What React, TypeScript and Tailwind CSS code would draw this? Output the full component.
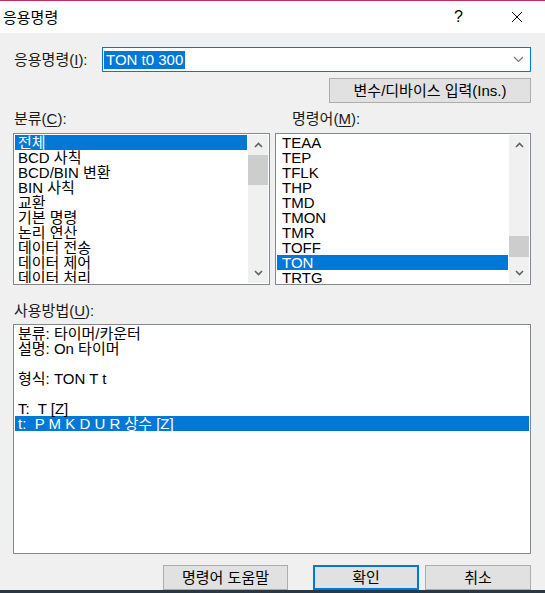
import React from "react";

const categories = [
  "전체",
  "BCD 사칙",
  "BCD/BIN 변환",
  "BIN 사칙",
  "교환",
  "기본 명령",
  "논리 연산",
  "데이터 전송",
  "데이터 제어",
  "데이터 처리",
];

const commands = ["TEAA", "TEP", "TFLK", "THP", "TMD", "TMON", "TMR", "TOFF", "TON", "TRTG"];

const usageLines = [
  "분류: 타이머/카운터",
  "설명: On 타이머",
  "",
  "형식: TON T t",
  "",
  "T:  T [Z]",
  "t:  P M K D U R 상수 [Z]",
];

const Chevron = ({ up }: { up?: boolean }) => (
  <svg width="9" height="6" viewBox="0 0 9 6">
    <polyline
      points={up ? "1,5 4.5,1.5 8,5" : "1,1 4.5,4.5 8,1"}
      fill="none"
      stroke="#606060"
      strokeWidth="1.6"
    />
  </svg>
);

// fake vertical scrollbar, thumb position in px from the top of the track
const ScrollBar = ({ thumbTop, thumbHeight }: { thumbTop: number; thumbHeight: number }) => (
  <div className="relative w-[20px] h-full bg-[#f0f0f0] flex flex-col justify-between">
    <div className="h-[20px] flex items-center justify-center">
      <Chevron up />
    </div>
    <div
      className="absolute left-0 w-[20px] bg-[#cdcdcd]"
      style={{ top: thumbTop, height: thumbHeight }}
    />
    <div className="h-[20px] flex items-center justify-center">
      <Chevron />
    </div>
  </div>
);

const Label = ({ text, hot, className = "" }: { text: string; hot: string; className?: string }) => (
  <span className={`text-[15px] leading-[15px] text-[#1a1a1a] ${className}`}>
    {text}(<span className="underline underline-offset-2">{hot}</span>):
  </span>
);

const WinButton = ({ text, width, primary }: { text: string; width: string; primary?: boolean }) => (
  <button
    className={`${width} h-[25px] bg-[#e1e1e1] text-[15px] leading-[15px] text-black ${
      primary ? "border-2 border-[#0078d7]" : "border border-[#adadad]"
    }`}
  >
    {text}
  </button>
);

export default function App() {
  return (
    <div className="w-[545px] h-[593px] overflow-hidden flex flex-col bg-[#f0f0f0] font-['Liberation_Sans','Noto_Sans_CJK_KR',sans-serif] text-black">
      <div className="h-[1px] bg-[#c42b5e]" />

      {/* title bar */}
      <div className="h-[32px] bg-white flex items-center">
        <span className="ml-[3px] text-[15px] font-['Noto_Sans_CJK_KR',sans-serif]">응용명령</span>
        <span className="ml-auto mr-[48px] text-[16px]">?</span>
        <svg width="12" height="12" viewBox="0 0 12 12" className="mr-[22px]">
          <path d="M1 1L11 11M11 1L1 11" stroke="#000" strokeWidth="1" />
        </svg>
      </div>

      <div className="flex-1 flex flex-col pl-[13px] pr-[14px]">
        {/* instruction combo */}
        <div className="mt-[14px] flex items-center">
          <span className="ml-[1px] w-[88px] text-[15px] leading-[15px] text-[#1a1a1a]">
            응용명령(<span className="underline underline-offset-2">I</span>):
          </span>
          <div className="flex-1 h-[25px] bg-white border border-[#0078d7] flex items-center pl-[1px] pr-[6px]">
            <span className="bg-[#0078d7] text-white text-[15px] leading-[18px] px-[2px]">TON t0 300</span>
            <svg width="11" height="7" viewBox="0 0 11 7" className="ml-auto">
              <polyline points="1,1 5.5,5.5 10,1" fill="none" stroke="#7a7a7a" strokeWidth="1.2" />
            </svg>
          </div>
        </div>

        <div className="mt-[6px] flex justify-end">
          <WinButton text="변수/디바이스 입력(Ins.)" width="w-[202px]" />
        </div>

        {/* category + command lists */}
        <div className="mt-[8px] grid grid-cols-[257px_256px] gap-x-[5px]">
          <Label text="분류" hot="C" className="ml-[1px]" />
          <Label text="명령어" hot="M" className="ml-[17px]" />

          <div className="mt-[7px] h-[152px] bg-white border border-[#828790] p-[1px] flex">
            <div className="flex-1 overflow-hidden">
              {categories.map((c, i) => (
                <div
                  key={c}
                  className={`h-[15px] leading-[15px] text-[15px] pl-[3px] whitespace-nowrap ${
                    i === 0 ? "bg-[#0078d7] text-white mr-[1px]" : ""
                  }`}
                >
                  {c}
                </div>
              ))}
            </div>
            <ScrollBar thumbTop={20} thumbHeight={30} />
          </div>

          <div className="mt-[7px] h-[152px] bg-white border border-[#828790] p-[1px] flex">
            <div className="flex-1 overflow-hidden">
              {commands.map((c) => (
                <div
                  key={c}
                  className={`h-[15px] leading-[15px] text-[15px] pl-[5px] ${
                    c === "TON" ? "bg-[#0078d7] text-white mr-[1px]" : ""
                  }`}
                >
                  {c}
                </div>
              ))}
            </div>
            <ScrollBar thumbTop={101} thumbHeight={21} />
          </div>
        </div>

        {/* usage */}
        <Label text="사용방법" hot="U" className="mt-[18px] ml-[1px]" />
        <div className="mt-[6px] h-[230px] bg-white border border-[#828790] p-[1px]">
          {usageLines.map((l, i) => (
            <div
              key={i}
              className={`h-[15px] leading-[15px] text-[15px] pl-[3px] whitespace-pre ${
                i === 6 ? "bg-[#0078d7] text-white" : ""
              }`}
            >
              {l}
            </div>
          ))}
        </div>

        {/* bottom buttons */}
        <div className="mt-[11px] flex justify-end items-center">
          <WinButton text="명령어 도움말" width="w-[125px]" />
          <div className="w-[25px]" />
          <WinButton text="확인" width="w-[106px]" primary />
          <div className="w-[6px]" />
          <WinButton text="취소" width="w-[106px]" />
        </div>
      </div>

      <div className="h-[3px] bg-[#283846]" />
    </div>
  );
}
